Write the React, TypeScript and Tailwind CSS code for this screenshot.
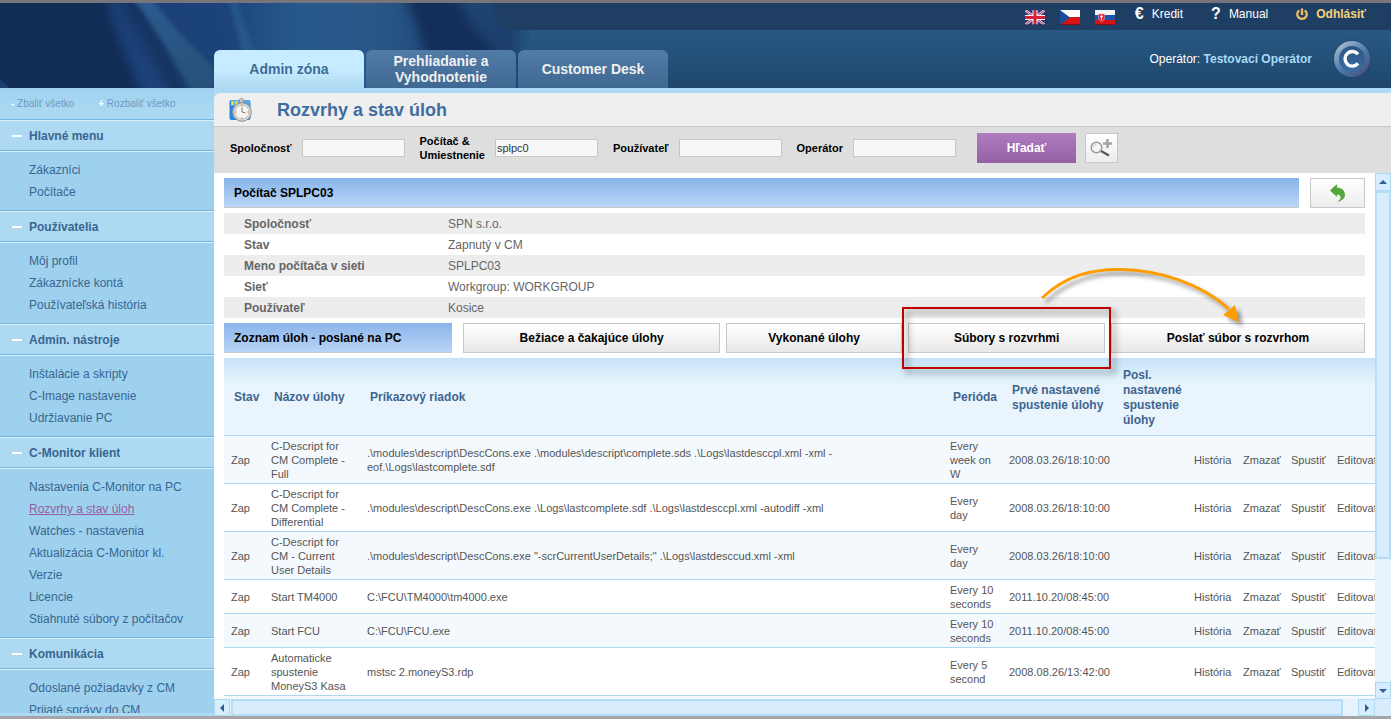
import React from 'react';

interface MenuSection {
  title: string;
  items: string[];
}

interface Task {
  name: string;
  command: string;
  period: string;
  first: string;
}

const ACTIVE_ITEM = 'Rozvrhy a stav úloh';

const menu: MenuSection[] = [
  { title: 'Hlavné menu', items: ['Zákazníci', 'Počítače'] },
  { title: 'Používatelia', items: ['Môj profil', 'Zákaznícke kontá', 'Používateľská história'] },
  { title: 'Admin. nástroje', items: ['Inštalácie a skripty', 'C-Image nastavenie', 'Udržiavanie PC'] },
  {
    title: 'C-Monitor klient',
    items: [
      'Nastavenia C-Monitor na PC',
      'Rozvrhy a stav úloh',
      'Watches - nastavenia',
      'Aktualizácia C-Monitor kl.',
      'Verzie',
      'Licencie',
      'Stiahnuté súbory z počítačov',
    ],
  },
  { title: 'Komunikácia', items: ['Odoslané požiadavky z CM', 'Prijaté správy do CM'] },
];

const details = [
  ['Spoločnosť', 'SPN s.r.o.'],
  ['Stav', 'Zapnutý v CM'],
  ['Meno počítača v sieti', 'SPLPC03'],
  ['Sieť', 'Workgroup: WORKGROUP'],
  ['Používateľ', 'Kosice'],
];

const tasks: Task[] = [
  {
    name: 'C-Descript for CM Complete - Full',
    command: '.\\modules\\descript\\DescCons.exe .\\modules\\descript\\complete.sds .\\Logs\\lastdesccpl.xml -xml -\neof.\\Logs\\lastcomplete.sdf',
    period: 'Every week on W',
    first: '2008.03.26/18:10:00',
  },
  {
    name: 'C-Descript for CM Complete - Differential',
    command: '.\\modules\\descript\\DescCons.exe .\\Logs\\lastcomplete.sdf .\\Logs\\lastdesccpl.xml -autodiff -xml',
    period: 'Every day',
    first: '2008.03.26/18:10:00',
  },
  {
    name: 'C-Descript for CM - Current User Details',
    command: '.\\modules\\descript\\DescCons.exe "-scrCurrentUserDetails;" .\\Logs\\lastdesccud.xml -xml',
    period: 'Every day',
    first: '2008.03.26/18:10:00',
  },
  { name: 'Start TM4000', command: 'C:\\FCU\\TM4000\\tm4000.exe', period: 'Every 10 seconds', first: '2011.10.20/08:45:00' },
  { name: 'Start FCU', command: 'C:\\FCU\\FCU.exe', period: 'Every 10 seconds', first: '2011.10.20/08:45:00' },
  { name: 'Automaticke spustenie MoneyS3 Kasa', command: 'mstsc 2.moneyS3.rdp', period: 'Every 5 second', first: '2008.08.26/13:42:00' },
];

const actions = ['História', 'Zmazať', 'Spustiť', 'Editovať'];

const HeaderArt = () => (
  <svg className="absolute left-0 top-0" width="530" height="85" viewBox="0 0 530 85" aria-hidden="true">
    <defs>
      <linearGradient id="base" x1="0" x2="1">
        <stop offset="0" stopColor="#102a51" />
        <stop offset="0.18" stopColor="#112d56" />
        <stop offset="0.28" stopColor="#1c3f74" />
        <stop offset="0.44" stopColor="#1d467b" />
        <stop offset="0.56" stopColor="#27588a" />
        <stop offset="0.7" stopColor="#285788" />
        <stop offset="0.96" stopColor="#1c3f6c" />
        <stop offset="1" stopColor="#265580" />
      </linearGradient>
      <linearGradient id="ray" x1="0" y1="0" x2="0" y2="1">
        <stop offset="0" stopColor="#2b5c90" />
        <stop offset="1" stopColor="#274f77" />
      </linearGradient>
      <filter id="soft" x="-20%" y="-20%" width="140%" height="140%" colorInterpolationFilters="sRGB">
        <feGaussianBlur stdDeviation="6" />
      </filter>
      <filter id="edge" colorInterpolationFilters="sRGB">
        <feGaussianBlur stdDeviation="2" />
      </filter>
    </defs>
    <rect width="530" height="85" fill="url(#base)" />
    <g filter="url(#soft)">
      <path d="M-20-20h120c10 40 28 75 48 125H-20z" fill="#112c55" />
      <path d="M110-20c14 40 36 80 58 125h-20C132 65 114 30 104-20z" fill="#1d447d" />
      <path d="M118-20h12c22 45 44 80 64 125h-14C158 65 138 20 118-20z" fill="#15325f" />
      <path d="M150-20h60c10 30 22 60 36 90h-30C196 40 172 10 150-20z" fill="#1c427a" />
      <path d="M398-20h56c8 30 20 48 44 70l-6 20h-64c-4-30-14-60-30-90z" fill="#132e59" />
    </g>
    <g filter="url(#edge)">
      <path d="M132-6h18c24 30 46 56 64 70v30h-20C176 58 154 24 132-6z" fill="url(#ray)" />
      <path d="M228-6h8c6 22 12 40 24 60h-16C238 36 234 14 228-6z" fill="#27568a" />
    </g>
    <path d="M0 76l10 9H0z" fill="#1a3d6c" />
    <path d="M490 0h40v27h-24q-5 0-7-5z" fill="#1e3f63" />
  </svg>
);

const FlagGB = () => (
  <svg width="20" height="15" viewBox="0 0 20 15" aria-label="English">
    <rect width="20" height="15" fill="#243f87" />
    <path d="M0 0l20 15M20 0L0 15" stroke="#e9dfe8" strokeWidth="2.500" />
    <path d="M0 0l20 15M20 0L0 15" stroke="#d0233c" strokeWidth="1" />
    <path d="M10 0v15M0 7.500h20" stroke="#fbf3f5" strokeWidth="5" />
    <path d="M10 0v15M0 7.500h20" stroke="#d81f3c" strokeWidth="3" />
    <path d="M0 14.500h20" stroke="#1b2447" opacity="0.5" />
  </svg>
);

const FlagCZ = () => (
  <svg width="20" height="15" viewBox="0 0 20 15" aria-label="Čeština">
    <rect width="20" height="8" fill="#fff" />
    <rect y="7" width="20" height="8" fill="#d81313" />
    <path d="M0 0l10 7.500L0 15z" fill="#1c4c98" />
    <path d="M0 14.500h20" stroke="#5b0a14" opacity="0.6" />
  </svg>
);

const FlagSK = () => (
  <svg width="20" height="15" viewBox="0 0 20 15" aria-label="Slovenčina">
    <rect width="20" height="5" fill="#f4f6fa" />
    <rect y="5" width="20" height="5" fill="#1d55b0" />
    <rect y="10" width="20" height="5" fill="#d81313" />
    <path d="M3.500 4h6v4.500c0 1.500-1.500 2.500-3 3.200-1.500-.7-3-1.700-3-3.200z" fill="#e5303a" stroke="#e9a9b4" strokeWidth="0.500" />
    <path d="M6.500 5v5M5 6.500h3" stroke="#fff" strokeWidth="0.800" />
    <path d="M0 14.500h20" stroke="#5b0a14" opacity="0.6" />
  </svg>
);

const PowerIcon = () => (
  <svg width="12" height="13" viewBox="0 0 12 13" fill="none" stroke="#e9bf62" strokeWidth="2.400" aria-hidden="true">
    <path d="M3.200 2.500C1.300 3.800.9 6.500 1.900 8.500 3.500 11.600 8.500 11.600 10.100 8.500 11.100 6.500 10.700 3.800 8.800 2.500" />
    <path d="M6 0.500V7" />
  </svg>
);

const Logo = () => (
  <svg width="40" height="40" viewBox="0 0 40 40" aria-hidden="true">
    <defs>
      <linearGradient id="ring" x1="0.100" y1="0" x2="0.900" y2="1">
        <stop offset="0" stopColor="#b9c9d9" />
        <stop offset="0.25" stopColor="#7f9fc0" />
        <stop offset="0.55" stopColor="#4a77a6" />
        <stop offset="1" stopColor="#4c4c78" />
      </linearGradient>
      <linearGradient id="disc" x1="0" y1="0" x2="0" y2="1">
        <stop offset="0" stopColor="#2c5583" />
        <stop offset="1" stopColor="#3b6da2" />
      </linearGradient>
      <radialGradient id="halo">
        <stop offset="0.85" stopColor="#1b3f69" stopOpacity="0.600" />
        <stop offset="1" stopColor="#1b3f69" stopOpacity="0" />
      </radialGradient>
    </defs>
    <circle cx="20" cy="20" r="20" fill="url(#halo)" />
    <circle cx="20" cy="20" r="18" fill="url(#ring)" />
    <circle cx="20" cy="20" r="13" fill="url(#disc)" />
    <path d="M26 15.200a7.300 7.300 0 1 0 0 9.200" fill="none" stroke="#fff" strokeWidth="3.400" />
  </svg>
);

const ScheduleIcon = () => (
  <svg width="24" height="24" viewBox="0 0 24 24" aria-hidden="true">
    <rect x="0.500" y="2" width="21" height="20" rx="2" fill="#2e86dc" />
    <path d="M2 2h19v6H2z" fill="#52a5ee" />
    <path d="M3.500 3v4M7.500 3v4" stroke="#f5dc3c" strokeWidth="2.600" />
    <rect x="10.500" y="0.500" width="4" height="4" rx="1" fill="#c9c7c0" stroke="#8c8a84" strokeWidth="0.600" />
    <circle cx="13" cy="14" r="9.300" fill="#dcdad5" stroke="#8f8d89" />
    <circle cx="13" cy="14" r="7" fill="#f7f6f3" stroke="#b7b4ae" strokeWidth="0.800" />
    <path d="M13 9.500V14l3.500 1" fill="none" stroke="#7b7975" />
    <path d="M13 7.500v1M13 19.500v1M6.500 14h1M18.500 14h1" stroke="#777" />
  </svg>
);

const SearchPlusIcon = () => (
  <svg width="24" height="20" viewBox="0 0 24 20" aria-hidden="true">
    <path d="M12 13l8 4.500" stroke="#555" strokeWidth="2.200" />
    <circle cx="7.500" cy="9.500" r="5.300" fill="#f5f5f5" stroke="#999" strokeWidth="1.500" />
    <path d="M4.500 9a3.200 3.200 0 0 1 3-2.700" fill="none" stroke="#ccc" />
    <path d="M18.500 1v9M14 5.500h9" stroke="#a3a3a3" strokeWidth="2.600" />
  </svg>
);

const BackIcon = () => (
  <svg width="16" height="18" viewBox="0 0 16 18" aria-hidden="true">
    <path d="M7 0v3.500c5 .3 8 3 8 7.500 0 3-2.500 5.500-7.500 7C11.500 15 12 11 7 10.500V13L0 6.500z" fill="#54a63c" />
  </svg>
);

interface FieldProps {
  id: string;
  label: React.ReactNode;
  value?: string;
}

const Field = ({ id, label, value = '' }: FieldProps) => (
  <div className="flex items-center gap-2.5">
    <label htmlFor={id} className="whitespace-nowrap text-[11px] leading-[14px] font-bold text-black">
      {label}
    </label>
    <input id={id} type="text" defaultValue={value} className="h-[18px] w-[103px] border border-[#c8c8c8] bg-[#f7f7f7] px-px text-[11px] text-[#333]" />
  </div>
);

const TabButton = ({ children }: { children: React.ReactNode }) => (
  <button className="h-[30px] w-full border border-[#c8c8c8] bg-linear-to-b from-white to-[#e8e8e8] text-xs font-bold text-black">{children}</button>
);

const ScrollButton = ({ label, className, d }: { label: string; className: string; d: string }) => (
  <button aria-label={label} className={`flex shrink-0 items-center justify-center border border-[#add9f2] bg-[#d7ecfc] ${className}`}>
    <svg width="8" height="8" viewBox="0 0 8 8" aria-hidden="true">
      <path d={d} fill="#345c90" />
    </svg>
  </button>
);

const Sidebar = () => (
  <aside className="flex w-[214px] shrink-0 flex-col overflow-hidden border-b-3 border-[#addaf2] bg-[#9dd1ee] text-xs text-[#3a658f]">
    <div className="flex h-8 shrink-0 items-center gap-6 border-b border-[#72b7de] bg-linear-to-b from-[#a0d2ef] to-[#addaf2] pl-[11px] text-[10px] text-[#7099c2]">
      <a href="#collapse"><b className="text-white">-</b> Zbaliť všetko</a>
      <a href="#expand"><b className="text-white">+</b> Rozbaliť všetko</a>
    </div>
    {menu.map((section) => (
      <section key={section.title} className="shrink-0">
        <h2 className="flex h-[31px] items-center gap-[7px] border-t border-b border-t-[#d9effa] border-b-[#72b7de] bg-[#addaf2] pl-3 font-bold">
          <span className="h-0.5 w-[10px] bg-white" />
          {section.title}
        </h2>
        <ul className="border-t border-b border-t-[#d9effa] border-b-[#72b7de] py-[7px] pl-[29px] leading-[22px]">
          {section.items.map((item) => (
            <li key={item}>
              <a href="#menu" className={item === ACTIVE_ITEM ? 'text-[#9a5ba5] underline' : ''}>{item}</a>
            </li>
          ))}
        </ul>
      </section>
    ))}
  </aside>
);

const Header = () => (
  <header className="relative h-[85px] shrink-0 bg-linear-to-b from-[#285985] from-30% to-[#20476c]">
    <HeaderArt />
    <div className="relative flex h-full flex-col">
      <div className="ml-[528px] flex h-[27px] justify-end bg-[#1e3f63] pr-[25px] text-xs text-white">
        <div className="flex gap-[15px] pt-[7px]">
          <a href="#en"><FlagGB /></a>
          <a href="#cs"><FlagCZ /></a>
          <a href="#sk"><FlagSK /></a>
        </div>
        <nav className="flex h-[22px] items-center">
          <a href="#kredit" className="ml-5 flex items-center gap-2"><b className="text-base">€</b> Kredit</a>
          <a href="#manual" className="ml-7 flex items-center gap-2"><b className="text-base">?</b> Manual</a>
          <a href="#logout" className="ml-7 flex items-center gap-2 font-bold text-[#f8d478]"><PowerIcon /> Odhlásiť</a>
        </nav>
      </div>
      <div className="flex grow items-end justify-between pl-[214px]">
        <nav className="flex h-[38px] gap-0.5 text-center text-sm leading-4 font-bold text-[#f0f0f0]">
          <a href="#admin" className="flex w-[150px] items-center justify-center rounded-t-md bg-linear-to-b from-[#c8ecff] from-50% to-[#addaf2] text-[#3d6c99]">Admin zóna</a>
          <a href="#reports" className="flex w-[150px] items-center justify-center rounded-t-md bg-linear-to-b from-[#527ca8] to-[#3f6892]">Prehliadanie a<br />Vyhodnotenie</a>
          <a href="#desk" className="flex w-[150px] items-center justify-center rounded-t-md bg-linear-to-b from-[#527ca8] to-[#3f6892]">Customer Desk</a>
        </nav>
        <div className="flex h-full items-center gap-5 pr-[19px] text-xs text-white">
          <p>Operátor: <b className="text-[#a9daf5]">Testovací Operátor</b></p>
          <Logo />
        </div>
      </div>
    </div>
  </header>
);

const TaskTabs = () => (
  <div className="mt-[5px] flex gap-[11px]">
    <button className="h-[30px] w-1/5 shrink-0 border-b border-[#c8c8c8] bg-linear-to-b from-[#8ab5ea] to-[#b9d4f5] pl-2.5 text-left text-xs font-bold text-black">
      Zoznam úloh - poslané na PC
    </button>
    <div className="grid grow grid-cols-[257fr_176fr_197fr_254fr] gap-1.5">
      <TabButton>Bežiace a čakajúce úlohy</TabButton>
      <TabButton>Vykonané úlohy</TabButton>
      <div className="relative z-10">
        <TabButton>Súbory s rozvrhmi</TabButton>
        {/* highlighted tab and the arrow to the next step */}
        <div className="pointer-events-none absolute -inset-x-1.5 -inset-y-4 border-2 border-[#c00000] drop-shadow-[4px_4px_3px_rgba(0,0,0,0.5)]" />
        <svg className="pointer-events-none absolute -top-[60px] left-[130px] drop-shadow-[4px_4px_2px_rgba(0,0,0,0.4)]" width="210" height="72" viewBox="0 0 210 72" aria-hidden="true">
          <path d="M4 35C28 12 55 6 83 6.500 120 7 162 20 191 46" fill="none" stroke="#ff9c00" strokeWidth="3" />
          <path d="M185 52l12-10 4 17z" fill="#ff9c00" />
        </svg>
      </div>
      <TabButton>Poslať súbor s rozvrhom</TabButton>
    </div>
  </div>
);

const TaskTable = () => (
  <div className="mt-[5px] -mr-2.5 overflow-hidden">
    <table className="w-full min-w-[1166px] table-fixed border-separate border-spacing-0 text-left text-[11px] leading-[14px] text-[#555]">
      <colgroup>
        <col className="w-10" />
        <col className="w-24" />
        <col />
        <col className="w-[59px]" />
        <col className="w-[111px]" />
        <col className="w-[74px]" />
        <col className="w-[49px]" />
        <col className="w-12" />
        <col className="w-[46px]" />
        <col className="w-[60px]" />
      </colgroup>
      <thead>
        <tr className="h-[78px] bg-linear-to-b from-[#c5e4f8] to-[#e9f4fc] to-35% text-xs leading-[15px] text-[#3d6590] *:border-b *:border-[#add9f2] *:pt-0.5 *:pl-2.5">
          <th>Stav</th>
          <th>Názov úlohy</th>
          <th>Príkazový riadok</th>
          <th>Perióda</th>
          <th>Prvé nastavené spustenie úlohy</th>
          <th>Posl. nastavené spustenie úlohy</th>
          <th colSpan={4} />
        </tr>
      </thead>
      <tbody>
        {tasks.map((task) => (
          <tr key={task.name} className="odd:bg-[#f4f9fe] *:border-b *:border-[#add9f2] *:pt-[3px] *:pb-0.5 *:pl-[7px]">
            <td>Zap</td>
            <td className="pr-3">{task.name}</td>
            <td className="whitespace-pre-line">{task.command}</td>
            <td className="pr-1">{task.period}</td>
            <td>{task.first}</td>
            <td />
            {actions.map((action) => (
              <td key={action}><a href="#action">{action}</a></td>
            ))}
          </tr>
        ))}
        <tr className="h-12 bg-[#f4f9fe]">
          <td colSpan={10} />
        </tr>
      </tbody>
    </table>
  </div>
);

const App: React.FC = () => {
  return (
    <div className="flex h-screen flex-col overflow-hidden border-t-3 border-b-3 border-t-[#77757a] border-b-[#a5a5a8] bg-white font-['Liberation_Sans',Arial,sans-serif]">
      <Header />
      <div className="flex min-h-0 grow">
        <Sidebar />
        <main className="flex min-w-0 grow flex-col bg-[#addaf2] pt-[5px]">
          <div className="flex h-[34px] shrink-0 items-center gap-6 rounded-tl-md border-b border-[#c8c8c8] bg-[#efefef] pl-[15px]">
            <ScheduleIcon />
            <h1 className="text-lg font-bold text-[#406d9f]">Rozvrhy a stav úloh</h1>
          </div>
          <form className="flex h-[46px] shrink-0 items-center gap-[15px] bg-[#dedede] pb-1 pl-4">
            <Field id="company" label="Spoločnosť" />
            <Field id="computer" label={<>Počítač &amp;<br />Umiestnenie</>} value="splpc0" />
            <Field id="user" label="Používateľ" />
            <Field id="operator" label="Operátor" />
            <button type="button" className="ml-1.5 h-[30px] w-[99px] bg-linear-to-b from-[#b07cc0] to-[#9461a3] text-xs font-bold text-white">Hľadať</button>
            <button type="button" aria-label="Rozšírené hľadanie" className="-ml-1.5 flex h-[30px] w-[33px] items-center justify-center border border-[#c8c8c8] bg-linear-to-b from-white to-[#ececec]">
              <SearchPlusIcon />
            </button>
          </form>

          <div className="flex min-h-0 grow">
            <div className="min-w-0 grow overflow-hidden bg-white px-2.5 pt-[5px]">
              <div className="flex gap-[11px]">
                <h2 className="flex h-[30px] grow items-center border-b border-[#c8c8c8] bg-linear-to-b from-[#86b4ea] to-[#bcd6f6] pl-2.5 text-xs font-bold text-black">Počítač SPLPC03</h2>
                <button aria-label="Späť" className="flex h-[30px] w-[55px] items-center justify-center border border-[#c8c8c8] bg-linear-to-b from-white to-[#ececec]">
                  <BackIcon />
                </button>
              </div>
              <table className="mt-[5px] w-full text-left text-xs text-[#666]">
                <tbody>
                  {details.map(([name, value]) => (
                    <tr key={name} className="h-[21px] odd:bg-[#ededed]">
                      <th className="w-[224px] pl-5">{name}</th>
                      <td>{value}</td>
                    </tr>
                  ))}
                </tbody>
              </table>
              <TaskTabs />
              <TaskTable />
            </div>
            <div className="flex w-4 shrink-0 flex-col bg-[#e6f3fd]">
              <ScrollButton label="Hore" className="h-[18px]" d="M0 6l4-4 4 4z" />
              <div className="h-[368px] border-2 border-[#b5ddf6] bg-[#d7ecfc]" />
              <div className="grow" />
              <ScrollButton label="Dole" className="h-[17px]" d="M0 2l4 4 4-4z" />
            </div>
          </div>

          <div className="flex h-[17px] shrink-0 bg-[#e6f3fd]">
            <ScrollButton label="Vľavo" className="w-4" d="M6 0L2 4l4 4z" />
            <div className="mr-[15px] ml-px grow border-2 border-[#b5ddf6] bg-[#d7ecfc]" />
            <ScrollButton label="Vpravo" className="w-[17px]" d="M2 0l4 4-4 4z" />
            <div className="w-4 bg-[#d7ecfc]" />
          </div>
        </main>
      </div>
    </div>
  );
};

export default App;
